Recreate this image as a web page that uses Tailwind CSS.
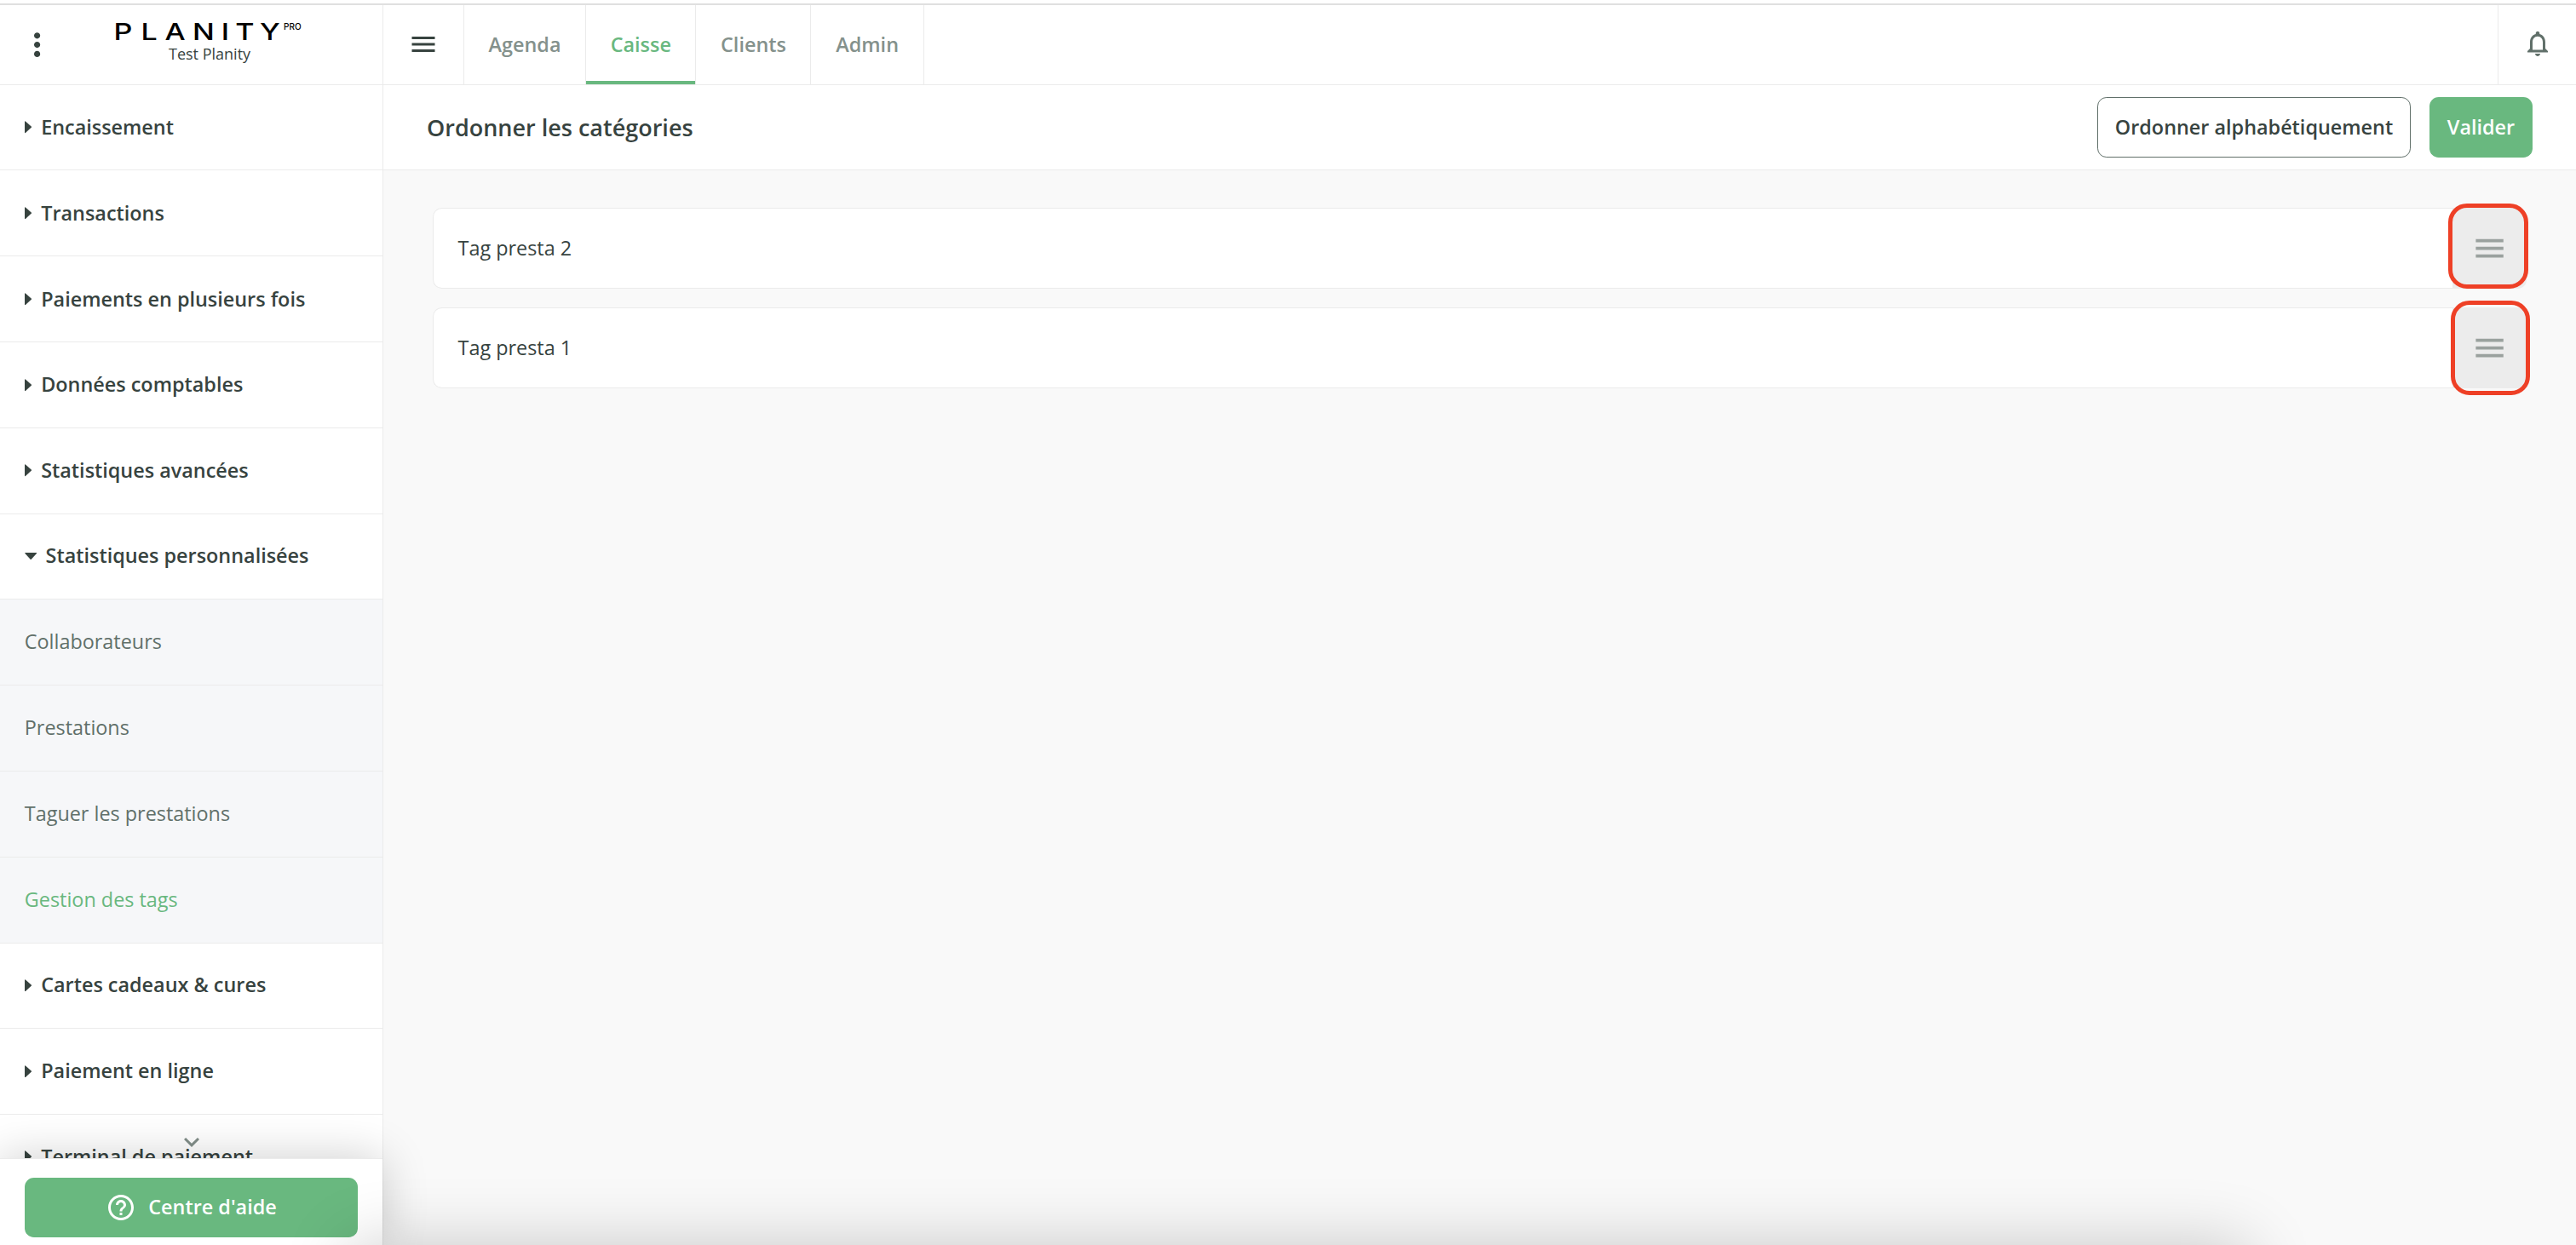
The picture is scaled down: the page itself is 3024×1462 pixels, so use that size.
<!DOCTYPE html>
<html lang="fr">
<head>
  <meta charset="UTF-8" />
  <meta name="viewport" content="width=device-width, initial-scale=1.0"/>
  <title>Planity Pro - Ordonner les catégories</title>
  <script src="https://cdn.jsdelivr.net/npm/@tailwindcss/browser@4"></script>
</head>
<body class="relative flex h-screen flex-col overflow-hidden bg-white font-['Open_Sans',sans-serif] text-[23.4px] text-[#37433f]">

  <div class="mt-[4px] h-[2px] shrink-0 bg-[#e0e0e0]"></div>

  <div class="flex min-h-0 flex-1">

    <!-- Sidebar -->
    <aside class="relative z-10 flex w-[450px] shrink-0 flex-col border-r border-[#ebebeb] bg-white">
      <div class="flex h-[93.6px] shrink-0 items-start border-b border-[#ebebeb]">
        <svg class="mt-[24.8px] ml-[22px] size-[43.2px] shrink-0" viewBox="0 0 24 24" fill="currentColor"><path d="M12 8c1.1 0 2-.9 2-2s-.9-2-2-2-2 .9-2 2 .9 2 2 2zm0 2c-1.1 0-2 .9-2 2s.9 2 2 2 2-.9 2-2-.9-2-2-2zm0 6c-1.1 0-2 .9-2 2s.9 2 2 2 2-.9 2-2-.9-2-2-2z"/></svg>
        <div class="mt-[18px] ml-[64.8px]">
          <svg class="block h-[27px] w-[230px] overflow-visible font-['Inter',sans-serif]" viewBox="0 0 230 27" fill="#000">
            <text transform="scale(1.24 1)" x="2.9 28.7 51.3 77.5 104.6 118 141.2" y="23" font-size="27.5" font-weight="500">PLANITY</text>
            <text x="203" y="10.7" font-size="10" font-weight="500">PRO</text>
          </svg>
          <p class="ml-[68px] text-[18px] leading-[24px]">Test Planity</p>
        </div>
      </div>

      <nav class="min-h-0 flex-1 overflow-hidden font-semibold">
        <a class="flex h-[100.8px] items-center gap-[11px] border-b border-[#ebebeb] pl-[28.8px]">
          <svg class="h-[14.4px] w-[8.4px]" viewBox="0 0 8.4 14.4" fill="currentColor"><path d="M0 .8Q0-.2 .9.5L8.4 7.2 .9 13.9Q0 14.6 0 13.6Z"/></svg>
          Encaissement
        </a>
        <a class="flex h-[100.8px] items-center gap-[11px] border-b border-[#ebebeb] pl-[28.8px]">
          <svg class="h-[14.4px] w-[8.4px]" viewBox="0 0 8.4 14.4" fill="currentColor"><path d="M0 .8Q0-.2 .9.5L8.4 7.2 .9 13.9Q0 14.6 0 13.6Z"/></svg>
          Transactions
        </a>
        <a class="flex h-[100.8px] items-center gap-[11px] border-b border-[#ebebeb] pl-[28.8px]">
          <svg class="h-[14.4px] w-[8.4px]" viewBox="0 0 8.4 14.4" fill="currentColor"><path d="M0 .8Q0-.2 .9.5L8.4 7.2 .9 13.9Q0 14.6 0 13.6Z"/></svg>
          Paiements en plusieurs fois
        </a>
        <a class="flex h-[100.8px] items-center gap-[11px] border-b border-[#ebebeb] pl-[28.8px]">
          <svg class="h-[14.4px] w-[8.4px]" viewBox="0 0 8.4 14.4" fill="currentColor"><path d="M0 .8Q0-.2 .9.5L8.4 7.2 .9 13.9Q0 14.6 0 13.6Z"/></svg>
          Données comptables
        </a>
        <a class="flex h-[100.8px] items-center gap-[11px] border-b border-[#ebebeb] pl-[28.8px]">
          <svg class="h-[14.4px] w-[8.4px]" viewBox="0 0 8.4 14.4" fill="currentColor"><path d="M0 .8Q0-.2 .9.5L8.4 7.2 .9 13.9Q0 14.6 0 13.6Z"/></svg>
          Statistiques avancées
        </a>
        <a class="flex h-[100.8px] items-center gap-[10.4px] border-b border-[#ebebeb] pb-px pl-[28.8px]">
          <svg class="h-[8.4px] w-[14.4px]" viewBox="0 0 14.4 8.4" fill="currentColor"><path d="M.8 0Q-.2 0 .5.9L7.2 8.4 13.9.9Q14.6 0 13.6 0Z"/></svg>
          Statistiques personnalisées
        </a>

        <!-- Submenu -->
        <div class="bg-[#f6f7f9] font-normal text-[#61706a]">
          <a class="flex h-[100.8px] items-center border-b border-[#ebebeb] pb-px pl-[28.8px]">Collaborateurs</a>
          <a class="flex h-[100.8px] items-center border-b border-[#ebebeb] pb-px pl-[28.8px]">Prestations</a>
          <a class="flex h-[100.8px] items-center border-b border-[#ebebeb] pb-px pl-[28.8px]">Taguer les prestations</a>
          <a class="flex h-[100.8px] items-center border-b border-[#ebebeb] pb-px pl-[28.8px] text-[#69b87f]">Gestion des tags</a>
        </div>

        <a class="flex h-[100.8px] items-center gap-[11px] border-b border-[#ebebeb] pb-px pl-[28.8px]">
          <svg class="h-[14.4px] w-[8.4px]" viewBox="0 0 8.4 14.4" fill="currentColor"><path d="M0 .8Q0-.2 .9.5L8.4 7.2 .9 13.9Q0 14.6 0 13.6Z"/></svg>
          Cartes cadeaux &amp; cures
        </a>
        <a class="flex h-[100.8px] items-center gap-[11px] border-b border-[#ebebeb] pb-px pl-[28.8px]">
          <svg class="h-[14.4px] w-[8.4px]" viewBox="0 0 8.4 14.4" fill="currentColor"><path d="M0 .8Q0-.2 .9.5L8.4 7.2 .9 13.9Q0 14.6 0 13.6Z"/></svg>
          Paiement en ligne
        </a>
        <a class="flex h-[100.8px] items-center gap-[11px] border-b border-[#ebebeb] pb-px pl-[28.8px]">
          <svg class="h-[14.4px] w-[8.4px]" viewBox="0 0 8.4 14.4" fill="currentColor"><path d="M0 .8Q0-.2 .9.5L8.4 7.2 .9 13.9Q0 14.6 0 13.6Z"/></svg>
          Terminal de paiement
        </a>
      </nav>

      <div class="relative h-[102px] shrink-0 border-t border-[#ebebeb] bg-white px-[29px] pt-[22px] shadow-[0_0_54px_rgba(0,0,0,0.2)]">
        <svg class="absolute -top-[38px] left-[207px] size-[36px] text-[#7b8782]" viewBox="0 0 24 24" fill="currentColor"><path d="M16.59 8.59 12 13.17 7.41 8.59 6 10l6 6 6-6z"/></svg>
        <button class="flex h-[70px] w-full items-center justify-center gap-[14px] rounded-[10.8px] bg-[#69b87f] font-semibold text-white">
          <svg class="size-[36px]" viewBox="0 0 24 24" fill="currentColor"><path d="M11 18h2v-2h-2v2zm1-16C6.48 2 2 6.48 2 12s4.48 10 10 10 10-4.48 10-10S17.52 2 12 2zm0 18c-4.41 0-8-3.59-8-8s3.59-8 8-8 8 3.59 8 8-3.59 8-8 8zm0-14c-2.21 0-4 1.79-4 4h2c0-1.1.9-2 2-2s2 .9 2 2c0 2-3 1.75-3 5h2c0-2.25 3-2.5 3-5 0-2.21-1.79-4-4-4z"/></svg>
          Centre d'aide
        </button>
      </div>
    </aside>

    <div class="flex min-w-0 flex-1 flex-col">
      <!-- Top navigation -->
      <header class="flex h-[93.6px] shrink-0 border-b border-[#ebebeb] font-semibold text-[#84918c]">
        <div class="flex w-[95px] items-center justify-center border-r border-[#ebebeb] text-[#37433f]">
          <svg class="size-[36px]" viewBox="0 0 24 24" fill="currentColor"><path d="M3 18h18v-2H3v2zm0-5h18v-2H3v2zm0-7v2h18V6H3z"/></svg>
        </div>
        <a class="flex items-center border-r border-[#ebebeb] px-[28.6px]">Agenda</a>
        <a class="relative flex items-center border-r border-[#ebebeb] px-[28.6px] text-[#69b87f]">Caisse
          <span class="absolute inset-x-0 bottom-0 h-[3.6px] bg-[#69b87f]"></span>
        </a>
        <a class="flex items-center border-r border-[#ebebeb] px-[28.6px]">Clients</a>
        <a class="flex items-center border-r border-[#ebebeb] px-[28.8px]">Admin</a>
        <div class="ml-auto flex w-[92px] items-center border-l border-[#ebebeb] pb-[3px] pl-[28px] text-[#61706a]">
          <svg class="size-[36px]" viewBox="0 0 24 24" fill="currentColor"><path d="M12 22c1.1 0 2-.9 2-2h-4c0 1.1.9 2 2 2zm6-6v-5c0-3.07-1.63-5.64-4.5-6.32V4c0-.83-.67-1.5-1.5-1.5s-1.5.67-1.5 1.5v.68C7.64 5.36 6 7.92 6 11v5l-2 2v1h16v-1l-2-2zm-2 1H8v-6c0-2.48 1.51-4.5 4-4.5s4 2.02 4 4.5v6z"/></svg>
        </div>
      </header>

      <!-- Title bar -->
      <div class="flex h-[100.8px] shrink-0 items-center border-b border-[#ebebeb] pr-[51px] pl-[51px] font-semibold">
        <h1 class="pt-px text-[27px]">Ordonner les catégories</h1>
        <button class="ml-auto h-[71px] w-[368px] rounded-[10.8px] border border-[#61706a]">Ordonner alphabétiquement</button>
        <button class="ml-[22px] h-[71px] w-[121px] rounded-[10.8px] bg-[#69b87f] text-white">Valider</button>
      </div>

      <main class="flex flex-1 flex-col gap-[22px] bg-[#f9f9f9] px-[58px] pt-[43.6px]">
        <div class="relative flex h-[95px] items-center rounded-[10.8px] bg-white pl-[29.5px] inset-ring inset-ring-[#ebebeb]">
          Tag presta 2
          <div class="ml-auto flex h-full w-[87px] items-center justify-center rounded-r-[10.8px] bg-[#ececec] text-[#9aa19e]">
            <svg class="size-[43.2px]" viewBox="0 0 24 24" fill="currentColor"><path d="M3 18h18v-2H3v2zm0-5h18v-2H3v2zm0-7v2h18V6H3z"/></svg>
          </div>
          <div class="absolute -top-[5px] -right-[2px] h-[100px] w-[94px] rounded-[22px] border-[5px] border-[#ee4026]"></div>
        </div>
        <div class="relative flex h-[95px] items-center rounded-[10.8px] bg-white pl-[29.5px] inset-ring inset-ring-[#ebebeb]">
          Tag presta 1
          <div class="ml-auto flex h-full w-[87px] items-center justify-center rounded-r-[10.8px] bg-[#ececec] text-[#9aa19e]">
            <svg class="size-[43.2px]" viewBox="0 0 24 24" fill="currentColor"><path d="M3 18h18v-2H3v2zm0-5h18v-2H3v2zm0-7v2h18V6H3z"/></svg>
          </div>
          <div class="absolute -top-[8px] -right-[4px] h-[111px] w-[93px] rounded-[22px] border-[5px] border-[#ee4026]"></div>
        </div>
      </main>
    </div>
  </div>

  <!-- Shadow rising from the panel docked below the window -->
  <div class="pointer-events-none absolute inset-x-0 bottom-0 z-20 h-[120px] overflow-hidden">
    <div class="mt-[120px] ml-[410px] h-[100px] w-[2230px] shadow-[0_0_80px_rgba(0,0,0,0.2)]"></div>
  </div>

</body>
</html>
